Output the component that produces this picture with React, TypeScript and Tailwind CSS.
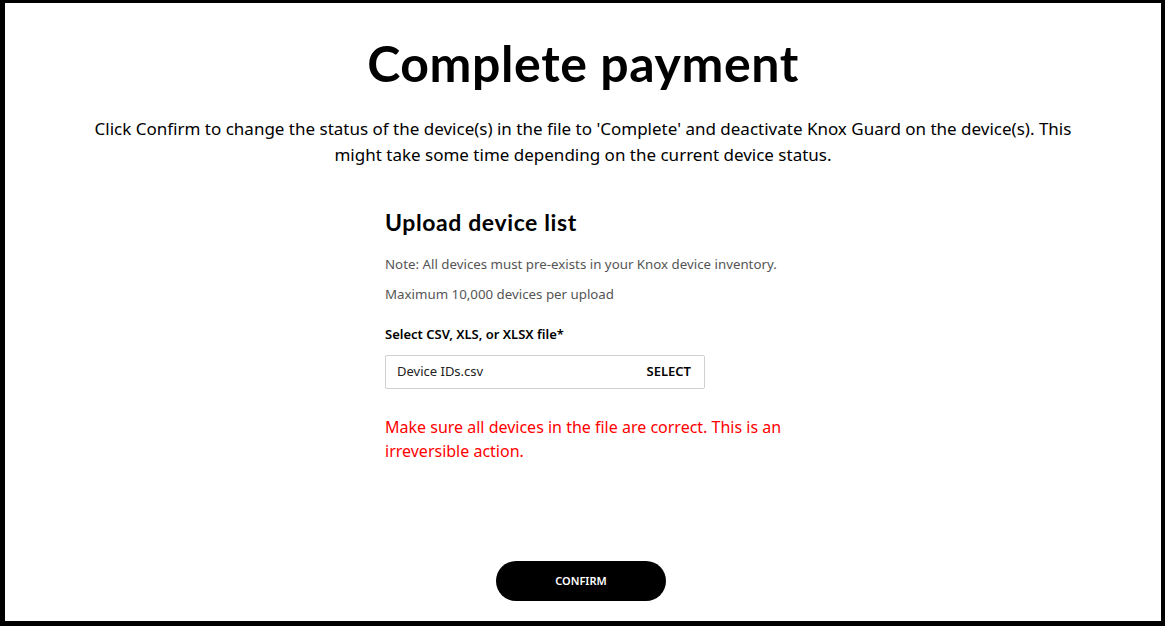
export default function App() {
  return (
    <div className="bg-black w-[1165px] h-[626px] pt-[3px] pl-[5px] pr-[4px] pb-[5px]">
      <div
        className="bg-white w-full h-full flex flex-col items-center"
        style={{ fontFamily: '"Noto Sans", Arial, sans-serif' }}
      >
        <h1
          className="mt-[29px] text-[50px] leading-[62px] font-bold text-black tracking-[0.6px]"
          style={{ fontFamily: 'Lato, "Noto Sans", sans-serif' }}
        >
          Complete payment
        </h1>
        <p className="mt-[22px] text-[17px] leading-[26px] text-black text-center w-[1000px]">
          Click Confirm to change the status of the device(s) in the file to 'Complete' and deactivate Knox Guard on
          the device(s). This might take some time depending on the current device status.
        </p>

        <div className="mt-[39px] ml-[4px] w-[400px] flex flex-col">
          <h2
            className="text-[23px] leading-[30px] font-bold text-black tracking-[0.6px]"
            style={{ fontFamily: 'Lato, "Noto Sans", sans-serif' }}
          >
            Upload device list
          </h2>
          <p className="mt-[17px] text-[13.3px] leading-[20px] text-[#555]">
            Note: All devices must pre-exists in your Knox device inventory.
          </p>
          <p className="mt-[10px] text-[13.3px] leading-[20px] text-[#555]">Maximum 10,000 devices per upload</p>
          <label className="mt-[20px] text-[13px] leading-[20px] font-semibold text-black">
            Select CSV, XLS, or XLSX file*
          </label>
          <div className="mt-[11px] w-[320px] h-[34px] border border-[#d0d0d0] rounded-[2px] flex items-center justify-between pl-[11px] pr-[13px]">
            <span className="text-[13px] text-[#222]">Device IDs.csv</span>
            <span className="text-[13px] font-semibold text-black">SELECT</span>
          </div>
          <p className="mt-[26px] text-[16px] leading-[24px] text-[#ff0000]">
            Make sure all devices in the file are correct. This is an irreversible action.
          </p>
        </div>

        <div className="flex-1" />
        <button className="mb-[20px] mr-[4px] w-[170px] h-[40px] rounded-full bg-black text-white text-[11px] font-semibold">
          CONFIRM
        </button>
      </div>
    </div>
  );
}
